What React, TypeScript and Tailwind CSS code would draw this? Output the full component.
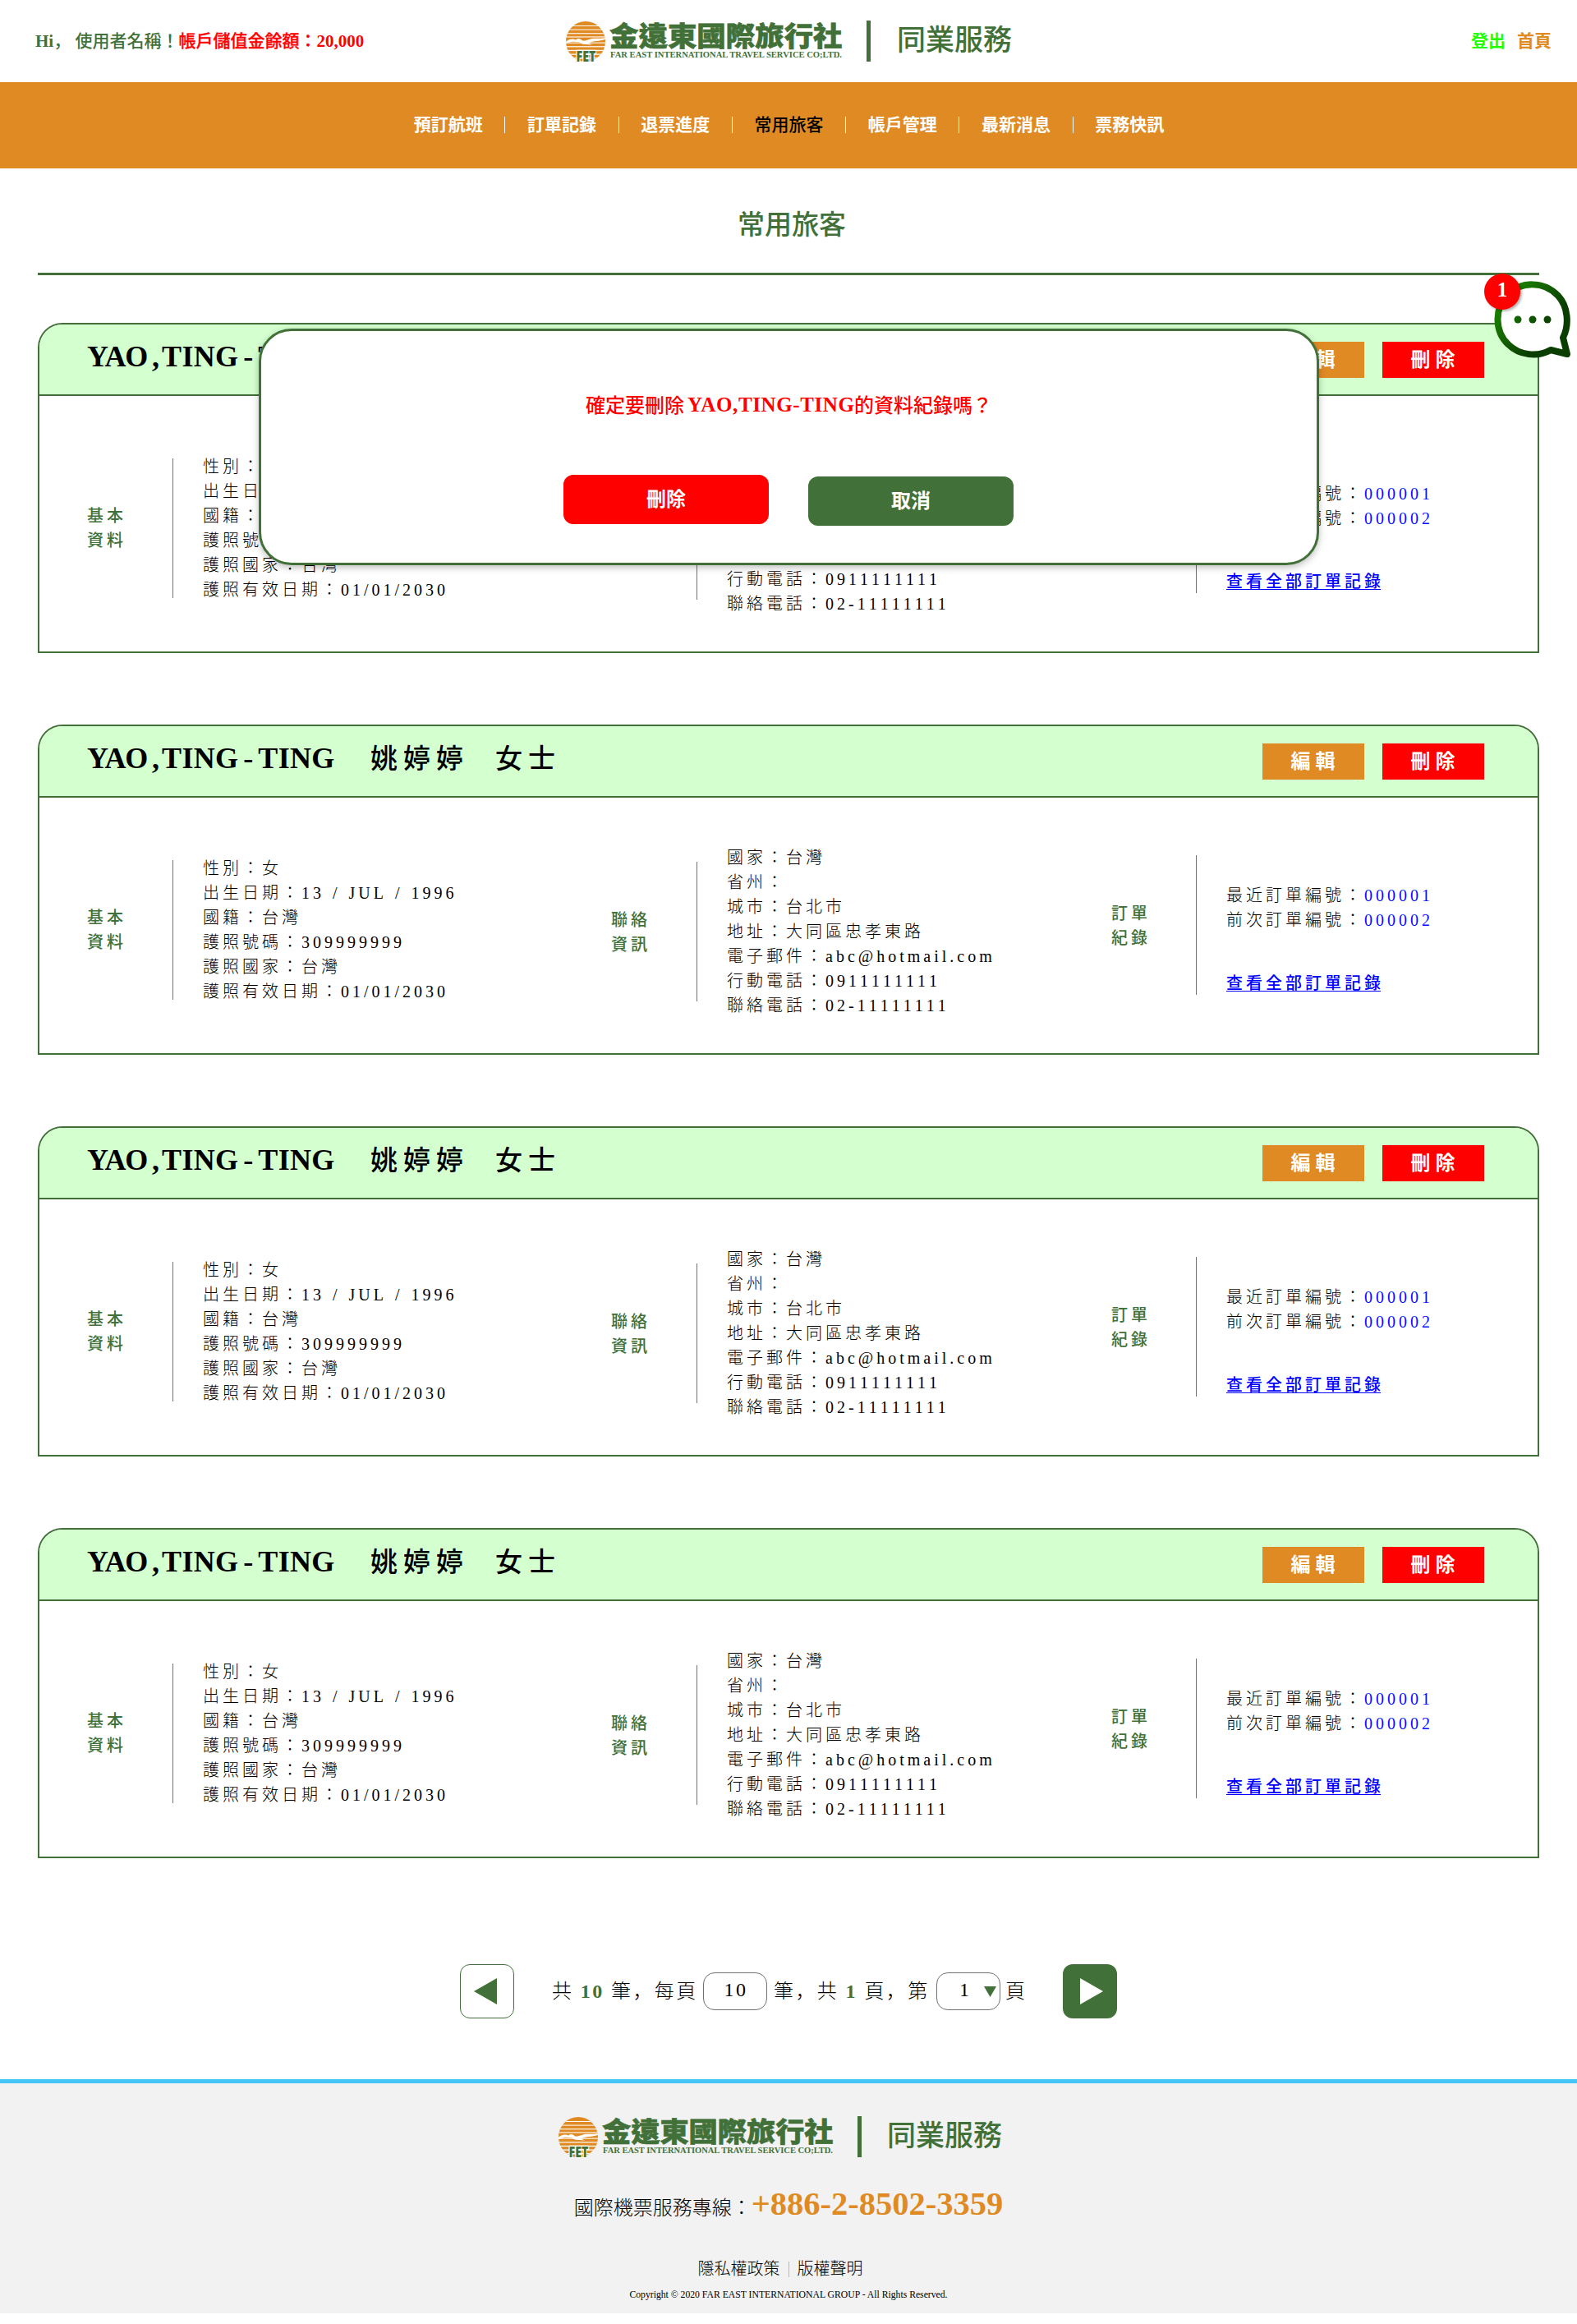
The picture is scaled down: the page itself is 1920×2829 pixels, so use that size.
import React from "react";

const NAV = ["預訂航班", "訂單記錄", "退票進度", "常用旅客", "帳戶管理", "最新消息", "票務快訊"];

const BASIC = [
  "性別：女",
  "出生日期：13 / JUL / 1996",
  "國籍：台灣",
  "護照號碼：309999999",
  "護照國家：台灣",
  "護照有效日期：01/01/2030",
];

const CONTACT = [
  "國家：台灣",
  "省州：",
  "城市：台北市",
  "地址：大同區忠孝東路",
  "電子郵件：abc@hotmail.com",
  "行動電話：0911111111",
  "聯絡電話：02-11111111",
];

function Emblem() {
  return (
    <svg width="48" height="49" viewBox="0 0 48 49" className="block shrink-0 overflow-visible">
      <defs>
        <clipPath id="sun">
          <ellipse cx="24" cy="24.5" rx="24" ry="24.5" />
        </clipPath>
      </defs>
      <g clipPath="url(#sun)">
        <rect width="48" height="49" fill="#e08a24" />
        <g fill="#fff">
          <rect y="5" width="48" height="1" />
          <rect y="9.6" width="48" height="1" />
          <rect y="14.2" width="48" height="1.1" />
          <rect y="18.4" width="48" height="1.1" />
          <rect y="25.6" width="48" height="1.1" />
          <rect y="30.2" width="48" height="1.2" />
          <rect y="34.8" width="48" height="1.3" />
          <rect y="39.5" width="48" height="1.3" />
          <rect y="44" width="48" height="1.3" />
          <path d="M0 24.5 C4 21.5 8 20.5 12 22.5 C14 20 18 20.5 20 23.5 C24 24 26 22.5 30 21.5 C35 20 41 21.5 48 20 L48 22 C42 24 37 23.5 33 24.5 L27 26.5 L32 28.6 L25 28 C20 28.5 19 27 16 25.3 C11 24.4 7 24 0 27 Z" />
        </g>
      </g>
      <text x="12.5" y="48.6" fontFamily="'Open Sans', sans-serif" fontWeight="800" fontSize="17" textLength="24" lengthAdjust="spacingAndGlyphs" fill="#417138" stroke="#fff" strokeWidth="2.4" paintOrder="stroke">
        FET
      </text>
    </svg>
  );
}

function Brand({ compact = false }: { compact?: boolean }) {
  const width = compact ? 280 : 282;
  return (
    <div className="flex items-center">
      <Emblem />
      <svg width={width} height="49" viewBox={`0 0 ${width} 49`} className="ml-[6px] block shrink-0 overflow-visible">
        <text x="-1" y="30" textLength={width + 1.5} lengthAdjust="spacingAndGlyphs" fontFamily="'Noto Sans CJK TC', sans-serif" fontWeight="900" fontSize="33" fill="#417138" stroke="#417138" strokeWidth="0.6">
          金遠東國際旅行社
        </text>
        <text x="0" y="44" textLength={width} lengthAdjust="spacingAndGlyphs" fontFamily="'Liberation Serif', serif" fontWeight="700" fontSize="10" fill="#417138">
          FAR EAST INTERNATIONAL TRAVEL SERVICE CO;LTD.
        </text>
      </svg>
      <div className="ml-[30px] h-[50px] w-[5px] bg-[#417138]" />
      <div className={`text-[35px] leading-[50px] font-medium ${compact ? "ml-[31px]" : "ml-[32px]"}`}>同業服務</div>
    </div>
  );
}

function Section(props: { label: string[]; className: string; children: React.ReactNode; labelClass: string; listClass: string }) {
  return (
    <div className={`flex items-start ${props.className}`}>
      <div className={`text-[20px] leading-[30px] font-medium tracking-[4px] text-[#417138] ${props.labelClass}`}>
        {props.label.map((l) => (
          <div key={l}>{l}</div>
        ))}
      </div>
      <div className="h-[170px] w-px shrink-0 bg-[#707070]" />
      <div className={`text-[20px] leading-[30px] font-light tracking-[4px] [word-spacing:1px] whitespace-nowrap text-black [font-kerning:none] ${props.listClass}`}>
        {props.children}
      </div>
    </div>
  );
}

function Card() {
  return (
    <section className="h-[402px] rounded-t-[30px] border-2 border-[#417138] bg-white">
      <div className="flex h-[87px] items-start justify-between rounded-t-[28px] border-b-2 border-[#417138] bg-[#d4ffcf] pr-[65px] pl-[58px]">
        <div className="flex items-start text-[33px] leading-[80px] font-medium whitespace-nowrap text-black">
          <span className="w-[345px] text-[36px] leading-[78px] font-bold">
            <span className="tracking-[-1.2px]">YAO</span>
            <span className="ml-[6px]">,</span>
            <span className="ml-[3px] tracking-[0.3px]">TING</span>
            <span className="mx-[6px]">-</span>
            <span className="tracking-[0.3px]">TING</span>
          </span>
          <span className="w-[152px] tracking-[7px]">姚婷婷</span>
          <span className="tracking-[7px]">女士</span>
        </div>
        <div className="mt-[21px] flex gap-[22px] text-[24px] leading-[44px] font-bold tracking-[6px] text-white">
          <button className="h-[44px] w-[124px] bg-[#e08a24] pl-[5px]">編輯</button>
          <button className="h-[44px] w-[124px] bg-[#ff0000] pl-[5px]">刪除</button>
        </div>
      </div>
      <div className="flex items-start pl-[58px]">
        <Section label={["基本", "資料"]} className="mt-[76px] w-[638px]" labelClass="mt-[55px] w-[104px]" listClass="ml-[36px] -mt-[5px]">
          {BASIC.map((r) => (
            <div key={r}>{r}</div>
          ))}
        </Section>
        <Section label={["聯絡", "資訊"]} className="mt-[78px] w-[609px]" labelClass="mt-[56px] w-[104px]" listClass="ml-[36px] -mt-[20px]">
          {CONTACT.map((r) => (
            <div key={r}>{r}</div>
          ))}
        </Section>
        <Section label={["訂單", "紀錄"]} className="mt-[70px]" labelClass="mt-[56px] w-[103px]" listClass="ml-[36px] mt-[34px]">
          <div>
            最近訂單編號：<span className="text-[#0010ff]">000001</span>
          </div>
          <div>
            前次訂單編號：<span className="text-[#0010ff]">000002</span>
          </div>
          <div className="mt-[47px] flex">
            <a className="h-[25px] w-[188px] border-b border-[#0000ff] font-medium text-[#0000ff]">查看全部訂單記錄</a>
          </div>
        </Section>
      </div>
    </section>
  );
}

function ConfirmDialog() {
  return (
    <div className="absolute top-[400px] left-[315px] h-[288px] w-[1291px] rounded-[40px] border-3 border-[#417138] bg-white shadow-[0_3px_8px_rgba(0,0,0,0.25)]">
      <p className="mt-[71px] flex justify-center text-[24px] leading-[40px] font-medium whitespace-nowrap text-[#ff0000]">
        <span>確定要刪除</span>
        <span className="ml-[4px] w-[203px] text-[25px] leading-[38px] font-bold tracking-[0.6px]">YAO,TING-TING</span>
        <span>的資料紀錄嗎？</span>
      </p>
      <div className="mt-[64px] flex justify-center gap-[48px] pr-[2px] text-[24px] leading-[61px] font-bold text-white">
        <button className="h-[60px] w-[250px] rounded-[12px] bg-[#ff0000] pl-px">刪除</button>
        <button className="mt-[2px] h-[60px] w-[250px] rounded-[12px] bg-[#417138] pl-px">取消</button>
      </div>
    </div>
  );
}

function ChatBubble() {
  return (
    <div className="absolute top-[333px] left-[1807px] h-[103px] w-[106px]">
      <svg width="106" height="103" viewBox="0 0 106 103" className="block">
        <defs>
          <linearGradient id="chat" x1="0" y1="0" x2="1" y2="0.8">
            <stop offset="0.1" stopColor="#1c8a00" />
            <stop offset="0.75" stopColor="#0a3d00" />
          </linearGradient>
        </defs>
        <path d="M96 78 C104 62 102 40 90 27 C73 9 45 9 28 26 C12 43 13 71 29 86 C43 100 65 102 81 93 L101 98 Z" fill="#fff" stroke="url(#chat)" strokeWidth="8" strokeLinejoin="round" />
        <circle cx="41" cy="56" r="4.5" fill="#126300" />
        <circle cx="59" cy="56" r="4.5" fill="#0f5400" />
        <circle cx="77" cy="56" r="4.5" fill="#0c4600" />
      </svg>
      <div className="absolute top-0 left-0 h-[44px] w-[44px] rounded-full bg-[#ff0000] text-center text-[25px] leading-[40px] font-bold text-white shadow-[2px_2px_3px_rgba(0,0,0,0.3)]">1</div>
    </div>
  );
}

function Pagination() {
  return (
    <div className="mt-[129px] flex items-center justify-center">
      <button className="flex h-[66px] w-[66px] items-center justify-center rounded-[12px] border border-[#417138] pr-[4px]">
        <svg width="28" height="32" className="block">
          <path d="M28 0V32L0 16Z" fill="#417138" />
        </svg>
      </button>
      <div className="ml-[46px] flex w-[622px] items-center text-[24px] leading-[46px] font-light tracking-[2.4px] whitespace-pre text-black">
        <span className="w-[184px]">
          共 <b className="font-bold text-[#417138]">10</b> 筆，每頁
        </span>
        <span className="h-[46px] w-[78px] rounded-[14px] border border-[#707070] pl-[2px] text-center leading-[41px]">10</span>
        <span className="ml-[8px] w-[198px]">
          筆，共 <b className="font-bold text-[#417138]">1</b> 頁，第
        </span>
        <span className="flex h-[46px] w-[78px] items-center rounded-[14px] border border-[#707070] pl-[27px] leading-[41px]">
          <span className="h-full w-[30px]">1</span>
          <svg width="15" height="13" className="block">
            <path d="M0 0H15L7.5 13Z" fill="#417138" />
          </svg>
        </span>
        <span className="ml-[6px]">頁</span>
      </div>
      <button className="flex h-[66px] w-[66px] items-center justify-center rounded-[12px] bg-[#417138] pl-[4px]">
        <svg width="28" height="32" className="block">
          <path d="M0 0V32L28 16Z" fill="#fff" />
        </svg>
      </button>
    </div>
  );
}

export default function App() {
  return (
    <div className="relative h-[2829px] w-[1920px] overflow-hidden bg-white font-['Liberation_Serif','Noto_Sans_CJK_JP',serif] text-[#417138]">
      <header className="grid h-[100px] grid-cols-[646px_1fr_600px] items-center">
        <div className="pl-[43px] text-[21px] leading-[30px] font-medium whitespace-pre">
          <span className="font-bold">Hi</span>， 使用者名稱！
          <span className="text-[#ff0000]">
            <span className="[-webkit-text-stroke:0.3px_#ff0000]">帳戶儲值金餘額：</span>
            <b className="font-bold">20,000</b>
          </span>
        </div>
        <div className="pl-[43px]">
          <Brand />
        </div>
        <div className="flex justify-end gap-[14px] pr-[31px] text-[21px] leading-[30px] font-bold">
          <a className="text-[#22ff00]">登出</a>
          <a className="text-[#e08a24]">首頁</a>
        </div>
      </header>

      <nav className="flex h-[105px] items-center justify-center bg-[#e08a24] pb-px pl-px text-[21px] leading-[30px] font-bold text-white">
        {NAV.map((n, i) => (
          <React.Fragment key={n}>
            {i > 0 && <span className="mx-[26.625px] h-[20px] w-px bg-white" />}
            <a className={n === "常用旅客" ? "font-medium text-black" : ""}>{n}</a>
          </React.Fragment>
        ))}
      </nav>

      <main className="px-[46px]">
        <h1 className="h-[126.5px] pt-[44px] pl-[8px] text-center text-[33px] leading-[50px] font-medium">常用旅客</h1>
        <div className="h-[3px] bg-[#417138]" />
        <div className="mt-[58.5px] flex flex-col gap-[87px]">
          <Card />
          <Card />
          <Card />
          <Card />
        </div>
        <Pagination />
      </main>

      <footer className="mt-[74px] h-[285px] border-t-5 border-[#45c4f6] bg-[#f2f2f2] pt-[40px]">
        <div className="pl-[680px]">
          <Brand compact />
        </div>
        <div className="mt-[32px] flex h-[52px] justify-center text-[24px] leading-[50px] font-light text-black">
          <span className="mt-[5px]">國際機票服務專線：</span>
          <span className="text-[40.5px] font-bold text-[#e08a24]">+886-2-8502-3359</span>
        </div>
        <div className="mt-[37px] flex items-center justify-center pr-[20px] text-[20px] leading-[30px] font-light text-black">
          <a>隱私權政策</a>
          <span className="mx-[10px] h-[19px] w-px bg-[#b8b8b8]" />
          <a>版權聲明</a>
        </div>
        <p className="mt-[9px] text-center text-[11.7px] leading-[16px] text-black">
          Copyright © 2020 FAR EAST INTERNATIONAL GROUP - All Rights Reserved.
        </p>
      </footer>

      <ConfirmDialog />
      <ChatBubble />
    </div>
  );
}
